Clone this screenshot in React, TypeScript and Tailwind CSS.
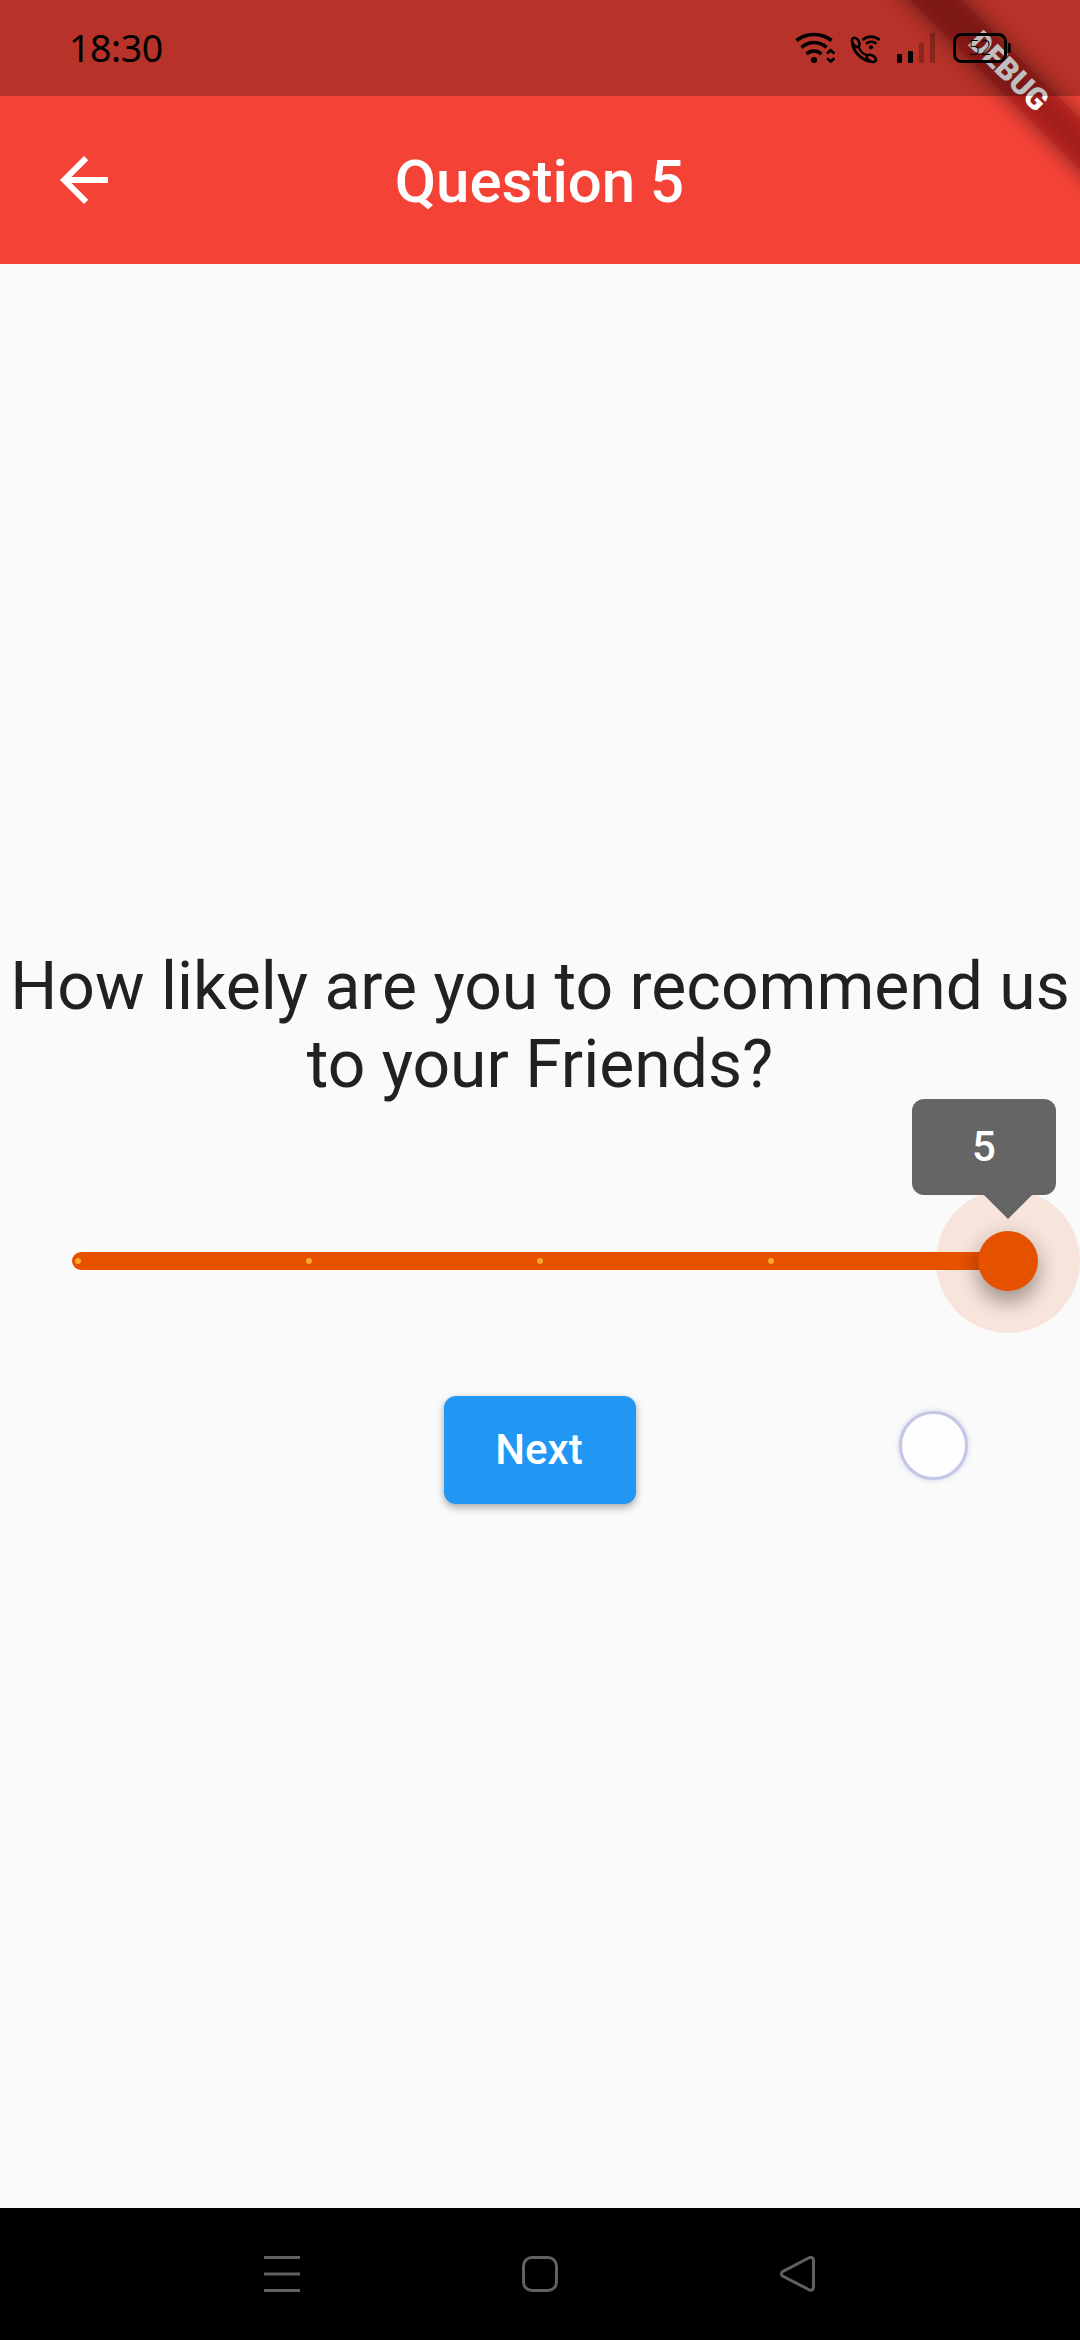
import React from "react";

function StatusIcons() {
  return (
    <svg className="block h-24 w-[300px]" viewBox="780 0 300 96" fill="none" stroke="#000">
      {/* wifi */}
      <g strokeWidth="3.6" strokeLinecap="butt">
        <path d="M796.5 40.5C806.5 32.5 821.5 32.5 831.5 40.5" />
        <path d="M801.5 47.5C808.5 40.8 819.5 40.8 826.5 47.5" />
        <path d="M806.5 54C811 50 817 50 821.5 54" />
      </g>
      <circle cx="814" cy="60" r="3.1" fill="#000" stroke="none" />
      <path d="M827 53.5l3.7-3.3 3.7 3.3M827 58.2l3.7 3.3 3.7-3.3" strokeWidth="2.7" />
      {/* wifi calling */}
      <ellipse cx="855.8" cy="42.3" rx="3.1" ry="5" transform="rotate(-32 855.8 42.3)" strokeWidth="2.7" />
      <ellipse cx="871.3" cy="58.3" rx="5" ry="3" transform="rotate(28 871.3 58.3)" strokeWidth="2.7" />
      <path d="M852.3 42C852.8 51.5 861.5 60.3 870.5 61.5" strokeWidth="2.9" />
      <path d="M859 46.5C859 50 863 54.5 867 55" strokeWidth="2.3" />
      <path d="M862.5 40C867.5 35.5 874.5 35.5 879.5 40" strokeWidth="2.6" />
      <path d="M866 43.7C869 41 873.5 41 876.5 43.7" strokeWidth="2.5" />
      <circle cx="871" cy="47.3" r="2.1" fill="#000" stroke="none" />
      {/* signal */}
      <g stroke="none" fill="#000">
        <rect x="897" y="54" width="5" height="9" rx="1.3" />
        <rect x="908" y="51" width="5" height="12" rx="1.3" />
        <rect x="919" y="43" width="5" height="20" rx="1.3" opacity=".24" />
        <rect x="930" y="33" width="5" height="30" rx="1.3" opacity=".24" />
      </g>
      {/* battery */}
      <rect x="954.5" y="34.5" width="51" height="27" rx="7" strokeWidth="3" />
      <path d="M1009.4 44.3v7.5" strokeWidth="2.6" strokeLinecap="round" />
      <text x="980" y="55" textAnchor="middle" fill="#000" stroke="none" fontSize="20" fontWeight="300" fontFamily="'Open Sans', 'Noto Sans', sans-serif">
        52
      </text>
    </svg>
  );
}

function DebugBanner() {
  return (
    <div className="absolute right-0 top-0 h-[240px] w-[240px] overflow-hidden">
      <div className="absolute left-[240px] top-0 h-0 w-0 origin-top-left rotate-45">
        <div className="absolute left-[-180px] top-[84px] h-9 w-[360px] bg-black/50 blur-[10.9px]" />
        <div className="absolute left-[-180px] top-[84px] flex h-9 w-[360px] items-center justify-center bg-[#b71c1ca0] pb-0.5 text-[30.6px] font-black leading-none text-white">
          DEBUG
        </div>
      </div>
    </div>
  );
}

const ticks = [78, 309, 540, 771];

function RatingSlider() {
  return (
    <div className="relative h-36 w-full">
      <div className="absolute left-[72px] right-[72px] top-[63px] h-[18px] rounded-full bg-[#e65100]" />
      {ticks.map((x) => (
        <span key={x} className="absolute top-[69px] h-1.5 w-1.5 -translate-x-1/2 rounded-full bg-[#ffa726]" style={{ left: x }} />
      ))}
      <div className="absolute right-0 top-0 h-36 w-36 rounded-full bg-[#e65100]/12" />
      <div className="absolute right-[42px] top-[42px] h-[60px] w-[60px] rounded-full bg-[#e65100] shadow-[0_12px_20px_rgba(0,0,0,0.28),0_3px_24px_rgba(0,0,0,0.14)]" />
      <div className="absolute right-6 top-[-90px] flex h-24 w-36 items-center justify-center rounded-xl bg-[#656565] text-[42px] font-medium leading-none text-white">
        5
        <svg className="absolute left-[72px] top-24 h-6 w-12" viewBox="0 0 48 24">
          <path d="M0 0H48L24 24Z" fill="#656565" />
        </svg>
      </div>
    </div>
  );
}

export default function App() {
  return (
    <div className="relative flex h-[2340px] w-[1080px] flex-col overflow-hidden bg-[#fafafa] font-['Roboto',sans-serif]">
      <header className="relative h-[264px] shrink-0 bg-[#f44336]">
        <div className="h-24" />
        <div className="flex h-[168px] items-center">
          <div className="flex w-[168px] justify-center">
            <svg className="h-[72px] w-[72px]" viewBox="0 0 24 24" fill="#fff">
              <path d="M20 11H7.83l5.59-5.59L12 4l-8 8 8 8 1.41-1.41L7.83 13H20v-2z" />
            </svg>
          </div>
          <h1 className="flex-1 pr-[169px] pt-1 text-center text-[60px] font-medium leading-[70px] text-white">
            Question 5
          </h1>
        </div>
        <DebugBanner />
        <div className="absolute inset-x-0 top-0 flex h-24 items-center justify-between bg-black/25">
          <span className="pl-[69px] font-['Noto_Sans',sans-serif] text-[37.5px] leading-none tracking-[-0.4px] text-black">18:30</span>
          <StatusIcons />
        </div>
      </header>

      <main className="relative flex flex-1 flex-col items-center pt-[684px]">
        <p className="w-full whitespace-nowrap text-center text-[66px] leading-[78px] text-[#212121]">
          How likely are you to recommend us
          <br />
          to your Friends?
        </p>
        <div className="mt-[85px] w-full">
          <RatingSlider />
        </div>
        <button className="mt-[63px] h-[108px] w-48 rounded-xl bg-[#2196f3] pr-0.5 text-[42px] font-medium leading-none text-white shadow-[0_4px_8px_rgba(0,0,0,0.26),0_1px_6px_rgba(0,0,0,0.1)]">
          Next
        </button>
        <span className="absolute left-[899px] top-[1147px] h-[69px] w-[69px] rounded-full border-[3px] border-[#c3c7e6] bg-[#fefefe] shadow-[0_0_5px_rgba(159,168,218,0.5)]" />
      </main>

      <nav className="h-[132px] shrink-0 bg-black">
        <svg className="block h-[132px] w-full" viewBox="0 2208 1080 132" fill="none" stroke="#616161" strokeWidth="3">
          <path d="M264 2257.5h36M264 2274h36M264 2290.5h36" />
          <rect x="523.5" y="2257.5" width="33" height="33" rx="8.5" />
          <path d="M783 2271.3L808.6 2258C811.5 2256.6 813.5 2257.5 813.5 2260.5V2287C813.5 2290 811.5 2291 808.6 2289.5L783 2276.3C780.8 2275 780.8 2272.6 783 2271.3Z" />
        </svg>
      </nav>
    </div>
  );
}
